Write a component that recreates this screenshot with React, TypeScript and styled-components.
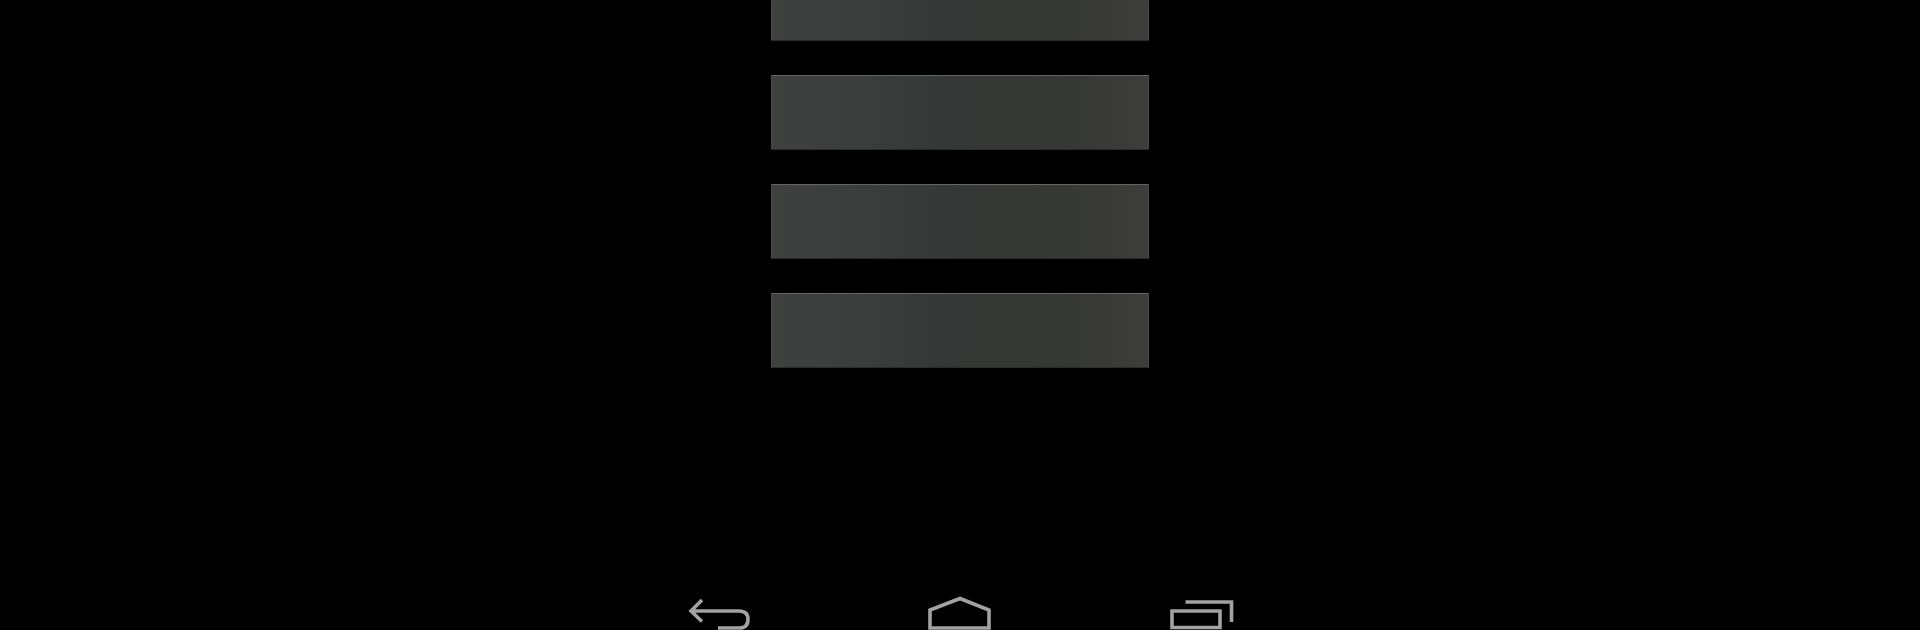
import React from 'react';
import styled, { createGlobalStyle } from 'styled-components';

const GlobalStyle = createGlobalStyle`
  html, body {
    margin: 0;
    padding: 0;
    background: #000;
  }
`;

const Screen = styled.div`
  width: 1920px;
  height: 630px;
  background: #000;
  overflow: hidden;
  display: flex;
  flex-direction: column;
  align-items: center;
`;

const BarStack = styled.div`
  display: flex;
  flex-direction: column;
  gap: 34px;
`;

const Bar = styled.div<{ $cut?: boolean }>`
  box-sizing: border-box;
  width: 378px;
  height: ${({ $cut }) => ($cut ? '41px' : '75px')};
  border-radius: 1px;
  border-top: ${({ $cut }) => ($cut ? 'none' : '1px solid #646563')};
  border-bottom: 1px solid #2b2c2a;
  border-left: 1px solid #484947;
  border-right: 1px solid #484947;
  background: linear-gradient(90deg, #3f413f 0, #3d403e 8%, #393d3b 25%, #343836 45%, #343734 60%, #363835 78%, #3a3b38 92%, #3d3e3b 100%);
`;

const NavBar = styled.nav`
  margin-top: auto;
  display: flex;
  gap: 176px;
  height: 36px;
`;

const NavIcon = styled.svg`
  display: block;
  width: 64px;
  height: 36px;
  overflow: visible;
  fill: none;
  stroke: #a2a2a2;
  stroke-width: 3.6;
`;

const BackIcon = () => (
  <NavIcon viewBox="0 0 64 36">
    <path d="M14 6 L3 17 L14 27.5 M3 17 H51 Q60 17 60 25.5 Q60 34 51 34 H30" />
  </NavIcon>
);

const HomeIcon = () => (
  <NavIcon viewBox="0 0 64 36">
    <path d="M2 34 V16 L32 4.5 L61 16 V34 Z" />
  </NavIcon>
);

const RecentsIcon = () => (
  <NavIcon viewBox="0 0 64 36">
    <path d="M17.5 8 H63.5 V28 M4 17 H52 V33.5 H4 Z" />
  </NavIcon>
);

export default function App() {
  return (
    <Screen>
      <GlobalStyle />
      <BarStack>
        <Bar $cut />
        <Bar />
        <Bar />
        <Bar />
      </BarStack>
      <NavBar>
        <BackIcon />
        <HomeIcon />
        <RecentsIcon />
      </NavBar>
    </Screen>
  );
}
